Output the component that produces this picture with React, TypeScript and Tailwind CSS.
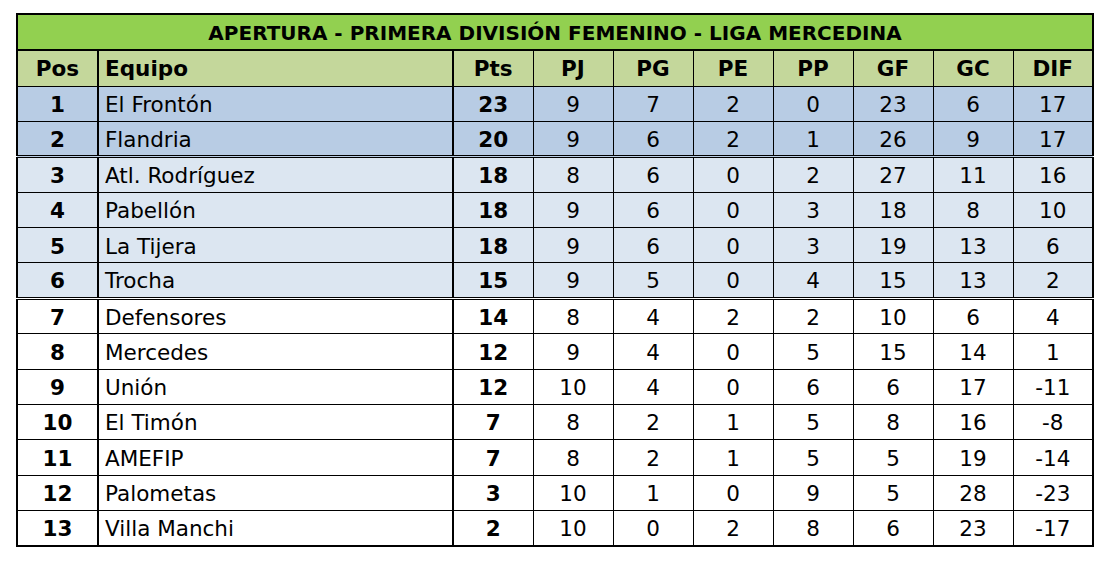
const rows = [
  [1, "El Frontón", 23, 9, 7, 2, 0, 23, 6, 17],
  [2, "Flandria", 20, 9, 6, 2, 1, 26, 9, 17],
  [3, "Atl. Rodríguez", 18, 8, 6, 0, 2, 27, 11, 16],
  [4, "Pabellón", 18, 9, 6, 0, 3, 18, 8, 10],
  [5, "La Tijera", 18, 9, 6, 0, 3, 19, 13, 6],
  [6, "Trocha", 15, 9, 5, 0, 4, 15, 13, 2],
  [7, "Defensores", 14, 8, 4, 2, 2, 10, 6, 4],
  [8, "Mercedes", 12, 9, 4, 0, 5, 15, 14, 1],
  [9, "Unión", 12, 10, 4, 0, 6, 6, 17, -11],
  [10, "El Timón", 7, 8, 2, 1, 5, 8, 16, -8],
  [11, "AMEFIP", 7, 8, 2, 1, 5, 5, 19, -14],
  [12, "Palometas", 3, 10, 1, 0, 9, 5, 28, -23],
  [13, "Villa Manchi", 2, 10, 0, 2, 8, 6, 23, -17],
];

const heads = ["PJ", "PG", "PE", "PP", "GF", "GC", "DIF"];

function rowBg(i: number) {
  if (i < 2) return "bg-[#b8cce4]";
  if (i < 6) return "bg-[#dce6f1]";
  return "bg-white";
}

export default function App() {
  return (
    <div className="min-h-[561px] bg-white pl-4 pt-[13px] font-['DejaVu_Sans','Liberation_Sans',sans-serif] text-[21.5px] leading-none text-black">
      <table className="w-[1076px] table-fixed border-collapse border-2 border-black">
        <colgroup>
          <col className="w-[81px]" />
          <col className="w-[355px]" />
          {Array.from({ length: 8 }).map((_, i) => (
            <col key={i} className="w-[80px]" />
          ))}
        </colgroup>
        <thead>
          <tr className="h-[36px] bg-[#92d050]">
            <th colSpan={10} className="border-b-2 border-black pt-0.5 text-center text-[20px] font-bold">
              APERTURA - PRIMERA DIVISIÓN FEMENINO - LIGA MERCEDINA
            </th>
          </tr>
          <tr className="h-[36px] bg-[#c4d79b] font-bold">
            <th className="border-r-2 border-black">Pos</th>
            <th className="border-r-2 border-black pl-1.5 text-left">Equipo</th>
            <th className="border-r border-black">Pts</th>
            {heads.map((h) => (
              <th key={h} className="border-r border-black">
                {h}
              </th>
            ))}
          </tr>
        </thead>
        <tbody>
          {rows.map((r, i) => (
            <tr
              key={r[0]}
              className={`h-[35.4px] border-t border-black ${rowBg(i)} ${
                i === 1 || i === 5 ? "border-b-[3px] border-b-black border-double" : ""
              }`}
            >
              <td className="border-r-2 border-black pt-0.5 text-center font-bold">{r[0]}</td>
              <td className="border-r-2 border-black pl-1.5 pt-0.5">{r[1]}</td>
              <td className="border-r border-black pt-0.5 text-center font-bold">{r[2]}</td>
              {r.slice(3).map((v, j) => (
                <td key={j} className="border-r border-black pt-0.5 text-center">
                  {v}
                </td>
              ))}
            </tr>
          ))}
        </tbody>
      </table>
    </div>
  );
}
